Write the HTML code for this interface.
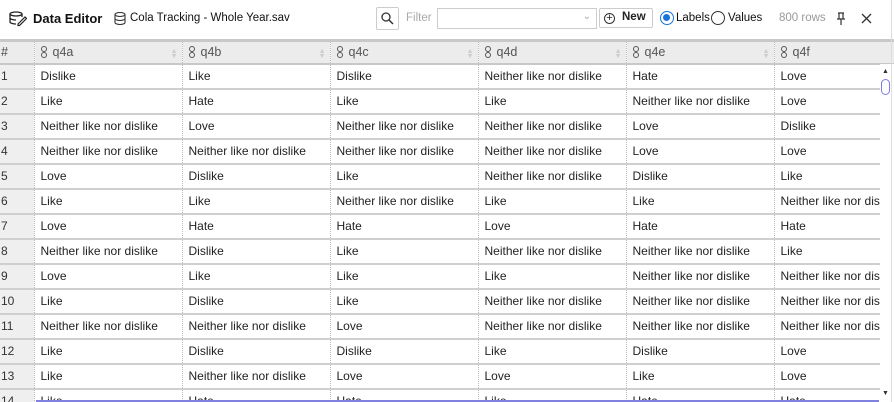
<!DOCTYPE html>
<html style="overflow:hidden"><head><style>
*{margin:0;padding:0;box-sizing:border-box}
html,body{width:894px;height:402px;overflow:hidden}
body{background:#fff;font-family:"Liberation Sans",sans-serif;font-size:12px;color:#222;position:relative}
.top{position:absolute;left:0;top:0;width:891px;height:39px}
.abs{position:absolute;white-space:nowrap}
table{position:absolute;left:0;top:39px;border-collapse:collapse;table-layout:fixed;width:922px}
td,th{height:25px;white-space:nowrap;overflow:hidden;padding-left:6px;text-align:left;font-weight:normal}
th{background:#ececec;border-top:3px solid #c8c8c8;border-bottom:2px solid #c8c8c8;height:23px;color:#555;font-size:12.5px;border-left:1px dotted #bbb}
th.n{border-left:none;padding-left:1px;color:#444}
td{border-bottom:2px solid #cfcfcf;border-left:1px dotted #bbb}
td.n{background:#efefef;border-left:none;padding-left:1px;color:#333}
.ic{display:inline-block;vertical-align:middle;margin-right:6px;width:6px;height:13px;position:relative}
.ic:before,.ic:after{content:"";position:absolute;left:0;width:4px;height:4px;border:1.3px solid #555;border-radius:50%}
.ic:before{top:0}.ic:after{top:6px}
.srt{position:absolute;right:4px;top:7px;color:#ccc;font-size:7px;line-height:5px}
</style></head><body>
<div class="top">
<svg class="abs" style="left:9px;top:11px" width="18" height="16" viewBox="0 0 18 16"><ellipse cx="7" cy="3" rx="6" ry="2" fill="none" stroke="#222" stroke-width="1.3"/><path d="M1 3v8c0 1 3 2 6 2M13 3v3M1 7c0 1 3 2 6 2" fill="none" stroke="#222" stroke-width="1.3"/><path d="M9 13l7-7 1.5 1.5-7 7H9z" fill="none" stroke="#222" stroke-width="1.2"/></svg>
<div class="abs" style="left:33px;top:11px;font-weight:bold;font-size:13px;color:#111">Data Editor</div>
<svg class="abs" style="left:114px;top:12px" width="12" height="13" viewBox="0 0 12 13"><ellipse cx="6" cy="2.5" rx="5" ry="2" fill="none" stroke="#333" stroke-width="1.1"/><path d="M1 2.5v8c0 1.1 2.2 2 5 2s5-.9 5-2v-8M1 6.5c0 1.1 2.2 2 5 2s5-.9 5-2" fill="none" stroke="#333" stroke-width="1.1"/></svg>
<div class="abs" style="left:130px;top:12px;font-size:11.5px;color:#111">Cola Tracking - Whole Year.sav</div>
<div class="abs" style="left:376px;top:7px;width:23px;height:23px;border:1px solid #ccc;border-radius:2px"><svg width="21" height="21"><circle cx="9" cy="9" r="4" fill="none" stroke="#333" stroke-width="1.3"/><path d="M12 12l4 4" stroke="#333" stroke-width="1.5"/></svg></div>
<div class="abs" style="left:406px;top:12px;color:#aaa;font-size:11.5px">Filter</div>
<div class="abs" style="left:437px;top:8px;width:160px;height:21px;border:1px solid #ccc"><span style="position:absolute;right:5px;top:2px;color:#aaa;font-size:10px">&#8964;</span></div>
<div class="abs" style="left:599px;top:8px;width:54px;height:20px;border:1px solid #ccc;border-radius:2px;font-weight:bold;font-size:11.5px;padding:2px 0 0 4px"><span style="display:inline-block;width:11px;height:11px;border:1px solid #333;border-radius:50%;text-align:center;line-height:9px;font-size:11px;font-weight:normal;vertical-align:-1px;margin-right:7px">+</span>New</div>
<div class="abs" style="left:660px;top:11px;width:14px;height:14px;border:1.5px solid #1a73d9;border-radius:50%"><div style="margin:2px;width:7px;height:7px;border-radius:50%;background:#1a73d9"></div></div>
<div class="abs" style="left:676px;top:12px;font-size:11.5px;color:#111">Labels</div>
<div class="abs" style="left:711px;top:11px;width:14px;height:14px;border:1px solid #333;border-radius:50%"></div>
<div class="abs" style="left:728px;top:12px;font-size:11.5px;color:#111">Values</div>
<div class="abs" style="left:779px;top:12px;font-size:11.5px;color:#999">800 rows</div>
<svg class="abs" style="left:836px;top:12px" width="10" height="13"><path d="M2 1h6M3 1v6M7 1v6M1 7h8M5 7v6" stroke="#333" stroke-width="1.2" fill="none"/></svg>
<svg class="abs" style="left:861px;top:13px" width="11" height="11"><path d="M1 1l9 9M10 1l-9 9" stroke="#333" stroke-width="1.3"/></svg>
</div>
<table>
<colgroup><col style="width:34px"><col style="width:148px"><col style="width:148px"><col style="width:148px"><col style="width:148px"><col style="width:148px"><col style="width:148px"></colgroup>
<tr><th class="n">#</th><th style="position:relative"><span class="ic"></span>q4a<span class="srt">▲<br>▼</span></th><th style="position:relative"><span class="ic"></span>q4b<span class="srt">▲<br>▼</span></th><th style="position:relative"><span class="ic"></span>q4c<span class="srt">▲<br>▼</span></th><th style="position:relative"><span class="ic"></span>q4d<span class="srt">▲<br>▼</span></th><th style="position:relative"><span class="ic"></span>q4e<span class="srt">▲<br>▼</span></th><th><span class="ic"></span>q4f</th></tr>
<tr><td class="n">1</td><td>Dislike</td><td>Like</td><td>Dislike</td><td>Neither like nor dislike</td><td>Hate</td><td>Love</td></tr>
<tr><td class="n">2</td><td>Like</td><td>Hate</td><td>Like</td><td>Like</td><td>Neither like nor dislike</td><td>Love</td></tr>
<tr><td class="n">3</td><td>Neither like nor dislike</td><td>Love</td><td>Neither like nor dislike</td><td>Neither like nor dislike</td><td>Love</td><td>Dislike</td></tr>
<tr><td class="n">4</td><td>Neither like nor dislike</td><td>Neither like nor dislike</td><td>Neither like nor dislike</td><td>Neither like nor dislike</td><td>Love</td><td>Love</td></tr>
<tr><td class="n">5</td><td>Love</td><td>Dislike</td><td>Like</td><td>Neither like nor dislike</td><td>Dislike</td><td>Like</td></tr>
<tr><td class="n">6</td><td>Like</td><td>Like</td><td>Neither like nor dislike</td><td>Like</td><td>Like</td><td>Neither like nor dislike</td></tr>
<tr><td class="n">7</td><td>Love</td><td>Hate</td><td>Hate</td><td>Love</td><td>Hate</td><td>Hate</td></tr>
<tr><td class="n">8</td><td>Neither like nor dislike</td><td>Dislike</td><td>Like</td><td>Neither like nor dislike</td><td>Neither like nor dislike</td><td>Like</td></tr>
<tr><td class="n">9</td><td>Love</td><td>Like</td><td>Like</td><td>Like</td><td>Neither like nor dislike</td><td>Neither like nor dislike</td></tr>
<tr><td class="n">10</td><td>Like</td><td>Dislike</td><td>Like</td><td>Neither like nor dislike</td><td>Neither like nor dislike</td><td>Neither like nor dislike</td></tr>
<tr><td class="n">11</td><td>Neither like nor dislike</td><td>Neither like nor dislike</td><td>Love</td><td>Neither like nor dislike</td><td>Neither like nor dislike</td><td>Neither like nor dislike</td></tr>
<tr><td class="n">12</td><td>Like</td><td>Dislike</td><td>Dislike</td><td>Like</td><td>Dislike</td><td>Love</td></tr>
<tr><td class="n">13</td><td>Like</td><td>Neither like nor dislike</td><td>Love</td><td>Love</td><td>Like</td><td>Love</td></tr>
<tr><td class="n">14</td><td>Like</td><td>Hate</td><td>Hate</td><td>Like</td><td>Hate</td><td>Hate</td></tr>
</table>
<div class="abs" style="left:880px;top:64px;width:14px;height:338px;background:#fff"></div>
<div class="abs" style="left:891px;top:0;width:1px;height:402px;background:#ddd"></div>
<div class="abs" style="left:882px;top:68px;font-size:7px;color:#333">▲</div>
<div class="abs" style="left:881px;top:79px;width:9px;height:16px;border:1.5px solid #7b7be8;border-radius:5px"></div>
<div class="abs" style="left:882px;top:390px;font-size:7px;color:#333">▼</div>
<div class="abs" style="left:36px;top:400px;width:843px;height:2px;background:#8080e0"></div>
</body></html>
